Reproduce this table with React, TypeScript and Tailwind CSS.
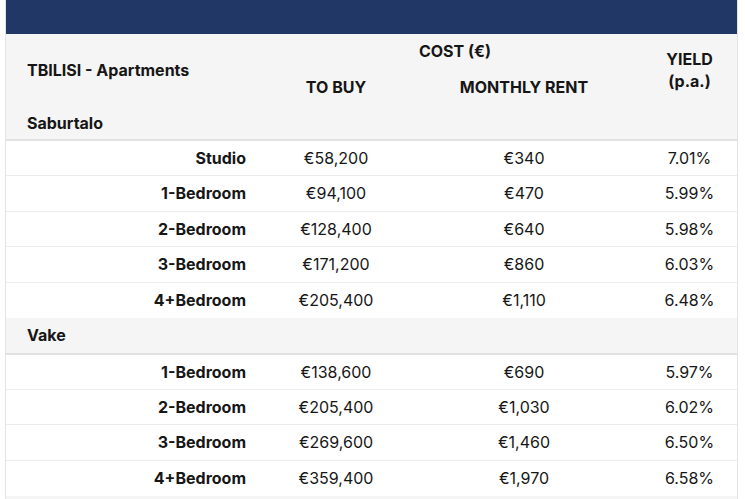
const saburtalo = [
  { type: 'Studio', buy: '€58,200', rent: '€340', yieldPa: '7.01%' },
  { type: '1-Bedroom', buy: '€94,100', rent: '€470', yieldPa: '5.99%' },
  { type: '2-Bedroom', buy: '€128,400', rent: '€640', yieldPa: '5.98%' },
  { type: '3-Bedroom', buy: '€171,200', rent: '€860', yieldPa: '6.03%' },
  { type: '4+Bedroom', buy: '€205,400', rent: '€1,110', yieldPa: '6.48%' },
];

const vake = [
  { type: '1-Bedroom', buy: '€138,600', rent: '€690', yieldPa: '5.97%' },
  { type: '2-Bedroom', buy: '€205,400', rent: '€1,030', yieldPa: '6.02%' },
  { type: '3-Bedroom', buy: '€269,600', rent: '€1,460', yieldPa: '6.50%' },
  { type: '4+Bedroom', buy: '€359,400', rent: '€1,970', yieldPa: '6.58%' },
];

type Row = { type: string; buy: string; rent: string; yieldPa: string };

const GroupRow = ({ name, h }: { name: string; h: string }) => (
  <tr className={`${h} bg-[#f5f5f5] border-b-2 border-[#e2e2e2]`}>
    <td colSpan={4} className="pl-[21px] font-bold text-left align-middle">
      {name}
    </td>
  </tr>
);

const DataRows = ({ rows }: { rows: Row[] }) => (
  <>
    {rows.map((r, i) => (
      <tr
        key={r.type}
        className={`h-[35.5px] bg-white ${i < rows.length - 1 ? 'border-b border-[#ededed]' : ''}`}
      >
        <td className="pr-[10px] text-right font-bold">{r.type}</td>
        <td className="text-center">{r.buy}</td>
        <td className="text-center">{r.rent}</td>
        <td className="pl-[10px] text-center">{r.yieldPa}</td>
      </tr>
    ))}
  </>
);

export default function App() {
  return (
    <div className="w-[745px] h-[499px] bg-white overflow-hidden font-['Inter',sans-serif] text-[16px] text-[#161616]">
      <div className="ml-[5px] w-[733px] h-full border-x border-[#e4e4e4]">
        <div className="h-[34px] bg-[#213766]" />
        <table className="w-full table-fixed border-collapse">
          <colgroup>
            <col className="w-[250px]" />
            <col className="w-[160px]" />
            <col className="w-[216px]" />
            <col />
          </colgroup>
          <thead className="bg-[#f5f5f5] font-bold">
            <tr className="h-[34px]">
              <th rowSpan={2} className="pl-[21px] text-left align-middle font-bold">
                TBILISI - Apartments
              </th>
              <th colSpan={2} className="pl-[22px] text-center align-middle font-bold">
                COST (€)
              </th>
              <th rowSpan={2} className="pl-[10px] text-center align-middle font-bold leading-[22px]">
                YIELD
                <br />
                (p.a.)
              </th>
            </tr>
            <tr className="h-[38px]">
              <th className="text-center font-bold">TO BUY</th>
              <th className="text-center font-bold">MONTHLY RENT</th>
            </tr>
          </thead>
          <tbody>
            <GroupRow name="Saburtalo" h="h-[34px]" />
            <DataRows rows={saburtalo} />
            <GroupRow name="Vake" h="h-[36px]" />
            <DataRows rows={vake} />
            <tr className="h-[36px] bg-[#f5f5f5]">
              <td colSpan={4} />
            </tr>
          </tbody>
        </table>
      </div>
    </div>
  );
}
